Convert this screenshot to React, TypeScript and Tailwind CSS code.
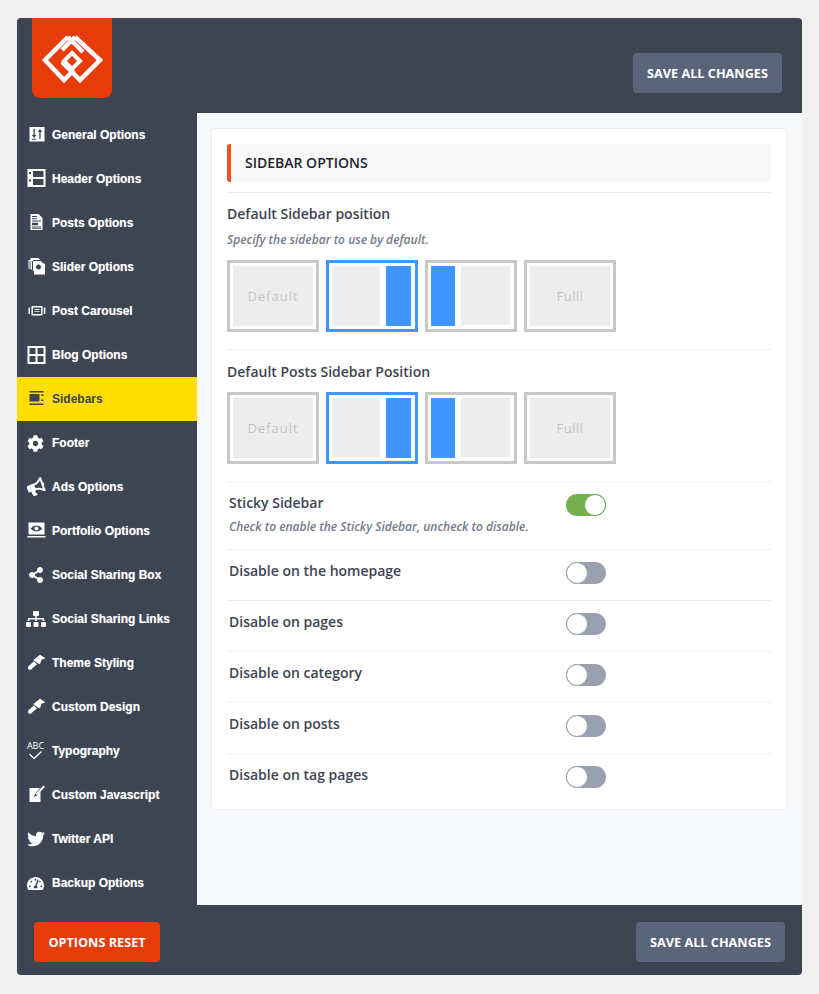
import { FaBullhorn, FaCog, FaShareAlt, FaSitemap, FaTachometerAlt, FaTwitter } from "react-icons/fa";
import type { ReactNode } from "react";

const Generic = ({ children }: { children: ReactNode }) => (
  <svg width="20" height="20" viewBox="0 0 20 20" fill="white">
    {children}
  </svg>
);

const BrushIcon = () => (
  <Generic>
    <path d="M2.200 13.400 8 8.200l3 3-6 5.200q-1.500.8-2.500-.2t-.3-1.800Z" />
    <path d="M8 6.500 14 1.800l5.500 3.400-4 1.500-1 3.300-1.500 1.300L7.200 7Z" />
  </Generic>
);

const navItems = [
  {
    label: "General Options",
    icon: (
      <Generic>
        <path
          fillRule="evenodd"
          d="M3.500 2h15v14.500h-15ZM7.500 4v6H5.800l2.300 3 2.400-3H8.800V4Zm-1.700 9.800v1h4.500v-1ZM14 4l-2.400 3h1.700v7h1.300V7h1.700Z"
        />
      </Generic>
    ),
  },
  {
    label: "Header Options",
    icon: (
      <Generic>
        <path
          fillRule="evenodd"
          d="M1.500 0h18v18h-18Zm1.500 3v2h2V3Zm4-1v6h10.500V2ZM3 10.500v2h2v-2ZM7 10v6h10.500v-6Z"
        />
      </Generic>
    ),
  },
  {
    label: "Posts Options",
    icon: (
      <Generic>
        <path
          fillRule="evenodd"
          d="M4.500 1h8l4 4v12h-12Zm1.500 2v1h5V3Zm0 2.200v1h5v-1Zm0 2.200v1h9v-1Zm0 2.300v2.500h6V9.700Zm0 3.800v.9h9v-.9Zm0 1.800v.7h9v-.7Z"
        />
      </Generic>
    ),
  },
  {
    label: "Slider Options",
    icon: (
      <Generic>
        <path d="M2.500 3h4.500v1H3.500v8h-1Z" />
        <path d="M4.500 1h8l1.500 2H6v9.500H4.500Z" />
        <path
          fillRule="evenodd"
          d="M7 4h8l2 2.500h2v11H8V14H7Zm5.500 3.500a2.500 2.500 0 1 0 .01 0Z"
        />
      </Generic>
    ),
  },
  {
    label: "Post Carousel",
    icon: (
      <Generic>
        <path
          fillRule="evenodd"
          d="M5.500 5h11v9.500h-11Zm1.500 1.500v6.500h8V6.500ZM8.500 8h5v.9h-5Zm0 2.200h5v.9h-5ZM2.500 6.500h1.500v6.500H2.500ZM17.800 6.500h1.500v6.500h-1.500Z"
        />
      </Generic>
    ),
  },
  {
    label: "Blog Options",
    icon: (
      <Generic>
        <path
          fillRule="evenodd"
          d="M1.500 1h18v18h-18Zm2 2v6h6V3Zm8 0v6h6V3Zm-8 8v6h6v-6Zm8 0v6h6v-6Z"
        />
      </Generic>
    ),
  },
  {
    label: "Sidebars",
    active: true,
    icon: (
      <svg width="20" height="20" viewBox="0 0 20 20" fill="#3d4452">
        <path d="M3.500 2h14v1.500h-14ZM3.500 5h10v7.500h-10ZM15 5.500h2.500V7H15ZM15 10.500h2.500V12H15ZM3.500 14.500h14V16h-14Z" />
      </svg>
    ),
  },
  { label: "Footer", icon: <FaCog size={17} color="white" /> },
  { label: "Ads Options", icon: <FaBullhorn size={18} color="white" className="-rotate-[20deg]" /> },
  {
    label: "Portfolio Options",
    icon: (
      <Generic>
        <path
          fillRule="evenodd"
          d="M2.500 1.500h16v12h-16Zm8 3C8 4.500 6 6 4.700 7.500c1.300 1.600 3.300 3 5.800 3s4.500-1.400 5.800-3C15 6 13 4.500 10.500 4.500Zm0 1a2 2 0 1 1-.01 0ZM1.500 15h18v1.500h-18Z"
        />
      </Generic>
    ),
  },
  { label: "Social Sharing Box", icon: <FaShareAlt size={16} color="white" /> },
  { label: "Social Sharing Links", icon: <FaSitemap size={20} color="white" /> },
  { label: "Theme Styling", icon: <BrushIcon /> },
  { label: "Custom Design", icon: <BrushIcon /> },
  {
    label: "Typography",
    icon: (
      <div className="flex h-[20px] w-[20px] flex-col items-center font-normal">
        <span className="font-['Open_Sans',sans-serif] text-[9px] leading-[10px] text-white [text-shadow:none]">ABC</span>
        <svg width="15" height="9" viewBox="0 0 15 9" fill="none" stroke="white" strokeWidth="1.300">
          <path d="M1.500 3 6 7.500l7.500-7" />
        </svg>
      </div>
    ),
  },
  {
    label: "Custom Javascript",
    icon: (
      <Generic>
        <path d="M3.500 3h10.500L9 9l-1 3 3-1.500 3.500-4.500v11H3.500Z" />
        <path d="M17.500.5 19 2l-8 8-1.500-1Z" />
      </Generic>
    ),
  },
  { label: "Twitter API", icon: <FaTwitter size={18} color="white" /> },
  { label: "Backup Options", icon: <FaTachometerAlt size={17} color="white" /> },
];

type Layout = "default" | "right" | "left" | "full";

function LayoutChoice({ kind, selected, short }: { kind: Layout; selected?: boolean; short?: boolean }) {
  return (
    <div
      className={`flex h-[72px] w-[92px] gap-[6px] border-[3px] p-[3px] ${
        selected ? "border-[#4096ff]" : "border-[#c8c8c8]"
      }`}
    >
      {kind === "default" && (
        <div className="flex flex-1 items-center justify-center bg-[#ededed] pt-[1px] text-[13px] tracking-[1px] text-[#c4c4c4]">
          Default
        </div>
      )}
      {kind === "full" && (
        <div className="flex flex-1 items-center justify-center bg-[#ededed] pt-[1px] text-[13px] tracking-[0.5px] text-[#c4c4c4]">
          Fulll
        </div>
      )}
      {kind === "right" && (
        <>
          <div className={`w-[48px] bg-[#ededed] ${short ? "h-[59px]" : ""}`} />
          <div className="w-[25px] bg-[#4096ff]" />
        </>
      )}
      {kind === "left" && (
        <>
          <div className="w-[24px] bg-[#4096ff]" />
          <div className="h-[59px] w-[49px] bg-[#ededed]" />
        </>
      )}
    </div>
  );
}

function LayoutRow({ short }: { short?: boolean }) {
  return (
    <div className="flex gap-[7px]">
      <LayoutChoice kind="default" />
      <LayoutChoice kind="right" selected short={short} />
      <LayoutChoice kind="left" />
      <LayoutChoice kind="full" />
    </div>
  );
}

function Toggle({ on }: { on?: boolean }) {
  return (
    <div
      className={`flex h-[22px] w-[40px] rounded-full ${
        on ? "justify-end bg-[#75b04f]" : "justify-start bg-[#99a1b0]"
      }`}
    >
      <div
        className={`h-[22px] w-[22px] rounded-full border bg-white ${
          on ? "border-[#75b04f]" : "border-[#99a1b0]"
        }`}
      />
    </div>
  );
}

function SwitchRow({ label }: { label: string }) {
  return (
    <div className="flex h-[51px] border-t border-[#eeeeee] pl-[2px]">
      <div className="w-[337px] pt-[11px] text-[14px] leading-[20px] font-semibold text-[#3d4452]">{label}</div>
      <div className="pt-[12px]">
        <Toggle />
      </div>
    </div>
  );
}

function SaveButton() {
  return (
    <button className="h-[40px] w-[149px] rounded-[4px] bg-[#5a6579] pt-[1px] text-[12.700px] font-bold text-white">
      SAVE ALL CHANGES
    </button>
  );
}

export default function App() {
  return (
    <div className="h-[994px] w-[819px] bg-[#f0f0f0] px-[17px] pt-[18px] font-['Open_Sans',sans-serif]">
      <div className="flex h-[957px] w-[785px] flex-col overflow-hidden rounded-[4px] bg-[#3d4452]">
        <header className="flex h-[95px] shrink-0 justify-between pr-[20px] pl-[15px]">
          <div className="flex h-[80px] w-[80px] items-center justify-center rounded-b-[8px] bg-[#e63c0a] pt-[2px]">
            <svg width="62" height="50" viewBox="11 7 62 50" fill="none" stroke="white" strokeWidth="4.500">
              <path d="M38 10 15 33l19 20 10-10" />
              <path d="M45 10 70 33 50 53 32 35" />
              <path d="M38 10 53 25" />
              <path d="M45 10 32 23" />
              <path d="M42 26l8 8-8 8-8-8Z" strokeWidth="4" />
            </svg>
          </div>
          <div className="pt-[35px]">
            <SaveButton />
          </div>
        </header>

        <div className="flex min-h-0 flex-1">
          <nav className="w-[180px] shrink-0">
            {navItems.map((item) => (
              <div
                key={item.label}
                className={`flex h-[44px] items-center pl-[6px] font-['Liberation_Sans',sans-serif] text-[12px] font-bold ${
                  item.active ? "bg-[#ffde00] text-[#3d4452]" : "text-white [text-shadow:0_0_1px_rgba(255,255,255,0.5)]"
                }`}
              >
                <span className="mr-[4px] flex w-[25px] justify-center">{item.icon}</span>
                {item.label}
              </div>
            ))}
          </nav>

          <main className="flex-1 bg-[#f7f8fa] pt-[15px] pr-[15px] pl-[14px]">
            <div className="h-[682px] rounded-[3px] border border-[#ebedf0] bg-white px-[15px] pt-[15px]">
              <div className="flex h-[38px] items-center rounded-l-[3px] border-l-[4px] border-[#f4511e] bg-[#f8f8f8] pb-[2px] pl-[14px] text-[14px] font-semibold text-[#1f2530]">
                SIDEBAR OPTIONS
              </div>

              <div className="mt-[10px] h-[157px] border-t border-[#eeeeee] pt-[11px]">
                <div className="text-[14px] leading-[20px] font-semibold text-[#3d4452]">Default Sidebar position</div>
                <div className="mt-[8px] text-[12px] leading-[16px] font-semibold text-[#737b8a] italic">
                  Specify the sidebar to use by default.
                </div>
                <div className="mt-[12px]">
                  <LayoutRow />
                </div>
              </div>

              <div className="h-[132px] border-t border-[#eeeeee] pt-[12px]">
                <div className="text-[14px] leading-[20px] font-semibold text-[#3d4452]">
                  Default Posts Sidebar Position
                </div>
                <div className="mt-[10px]">
                  <LayoutRow short />
                </div>
              </div>

              <div className="flex h-[68px] border-t border-[#eeeeee] pl-[2px]">
                <div className="w-[337px] pt-[11px]">
                  <div className="text-[14px] leading-[20px] font-semibold text-[#3d4452]">Sticky Sidebar</div>
                  <div className="mt-[6px] text-[12px] leading-[16px] font-semibold text-[#737b8a] italic">
                    Check to enable the Sticky Sidebar, uncheck to disable.
                  </div>
                </div>
                <div className="pt-[12px]">
                  <Toggle on />
                </div>
              </div>

              <SwitchRow label="Disable on the homepage" />
              <SwitchRow label="Disable on pages" />
              <SwitchRow label="Disable on category" />
              <SwitchRow label="Disable on posts" />
              <SwitchRow label="Disable on tag pages" />
            </div>
          </main>
        </div>

        <footer className="flex h-[70px] shrink-0 items-start justify-between px-[17px] pt-[17px]">
          <button className="h-[40px] w-[126px] rounded-[4px] bg-[#e63c0a] pt-[1px] text-[12.700px] font-bold text-white">
            OPTIONS RESET
          </button>
          <SaveButton />
        </footer>
      </div>
    </div>
  );
}
